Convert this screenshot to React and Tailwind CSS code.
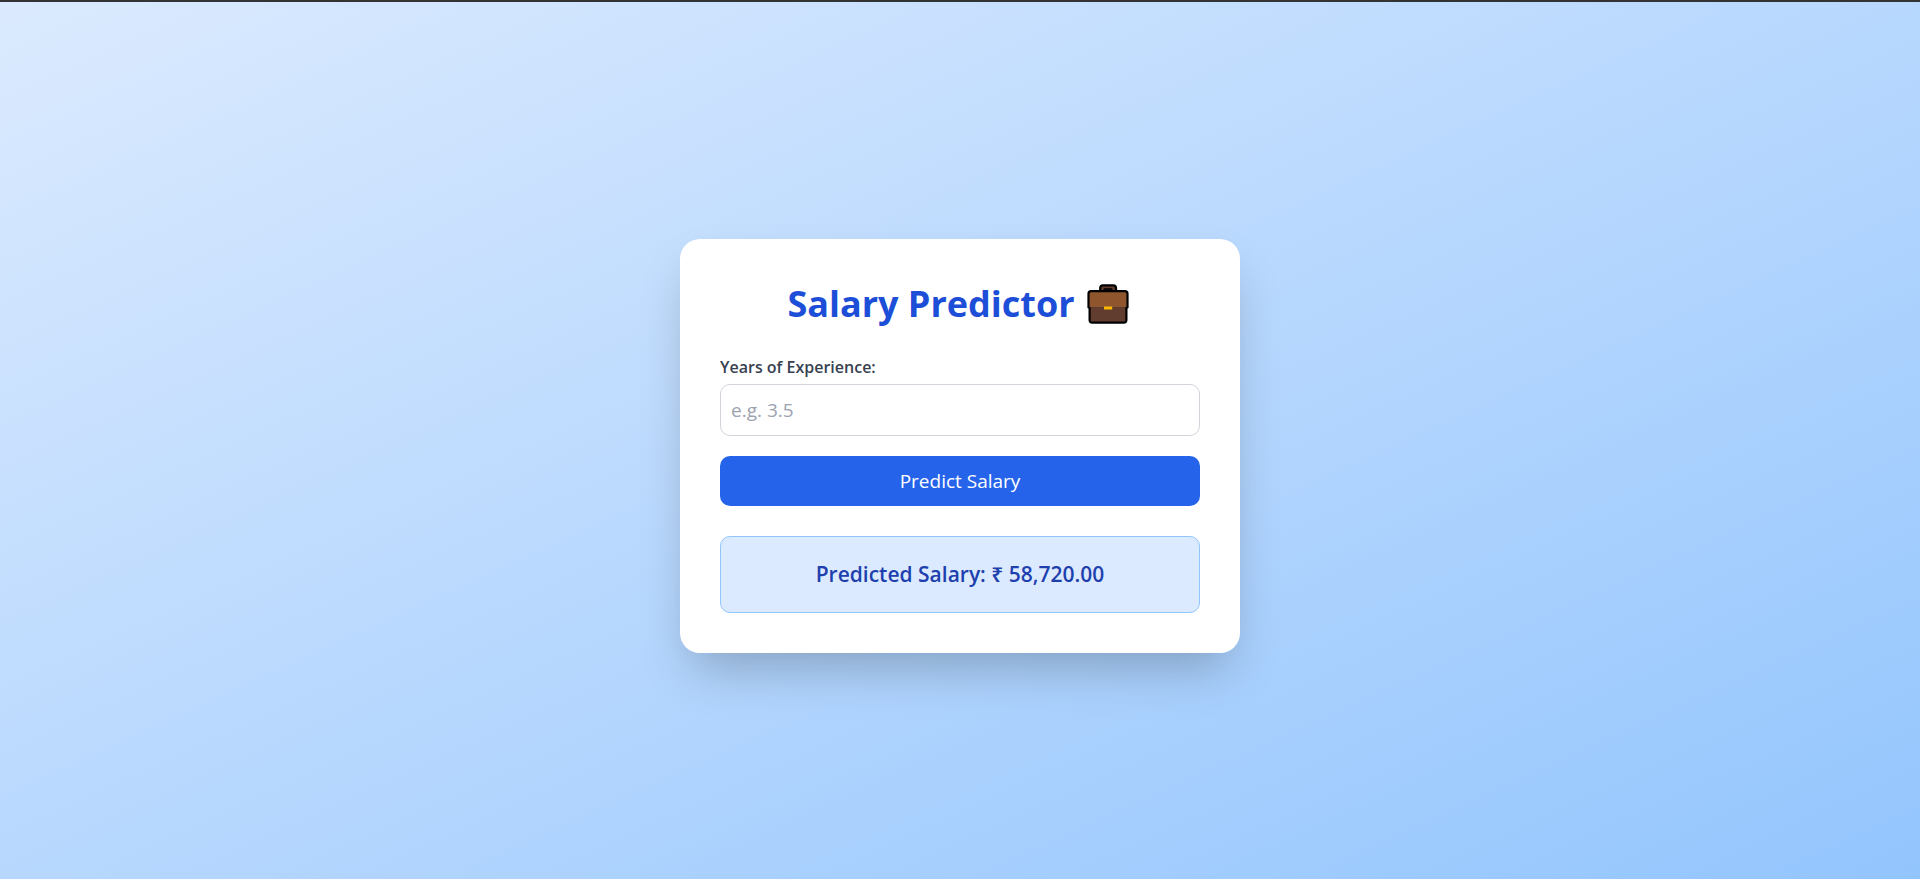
import { useState } from "react";

function Briefcase() {
  return (
    <svg viewBox="0 0 46 40" className="h-10 w-[46px]" role="img" aria-label="Briefcase">
      <path d="M13.200 8V4Q13.200 1.300 15.900 1.300H26.300Q29 1.300 29 4V8z" fill="#613d30" stroke="#000" strokeWidth="2.200" />
      <path d="M17 4.800H25V8H17z" fill="#140c0a" stroke="#000" strokeWidth="1" strokeLinejoin="round" />
      <path d="M2.600 22V36Q2.600 38.600 5.200 38.600H36.800Q39.400 38.600 39.400 36V22z" fill="#613d30" stroke="#000" strokeWidth="2.200" />
      <path d="M1.500 23V9.800Q1.500 7.200 4.100 7.200H37.900Q40.500 7.200 40.500 9.800V23z" fill="#8f562e" />
      <path d="M1.500 23.500V9.800Q1.500 7.200 4.100 7.200H37.900Q40.500 7.200 40.500 9.800V23.500" fill="none" stroke="#000" strokeWidth="2.200" strokeLinecap="round" />
      <rect x="17" y="22.500" width="8.200" height="3" fill="#ffb900" />
    </svg>
  );
}

export default function App() {
  const [years, setYears] = useState("");
  const [salary, setSalary] = useState("58,720.00");

  const predict = (event) => {
    event.preventDefault();
    const value = Number.parseFloat(years);
    if (Number.isFinite(value)) {
      const estimate = 25000 + value * 9500;
      setSalary(estimate.toLocaleString("en-IN", { minimumFractionDigits: 2, maximumFractionDigits: 2 }));
    }
  };

  return (
    <main className="flex min-h-screen items-center justify-center border-t-2 border-[#333333] bg-linear-to-br from-[#dbeafe] to-[#93c5fd] pt-[11px] font-['Open_Sans','Noto_Sans',sans-serif]">
      <section className="w-full max-w-[560px] rounded-[20px] bg-white p-10 shadow-[0_25px_50px_-12px_rgba(0,0,0,0.25)]">
        <h1 className="mb-[26px] flex items-center justify-center gap-3 text-[36px] leading-[50px] font-bold text-[#1d4ed8]">
          Salary Predictor
          <Briefcase />
        </h1>
        <form onSubmit={predict}>
          <label htmlFor="years" className="mb-1 block text-base leading-[25px] font-semibold text-[#374151]">
            Years of Experience:
          </label>
          <input
            id="years"
            type="text"
            inputMode="decimal"
            placeholder="e.g. 3.5"
            value={years}
            onChange={(event) => setYears(event.target.value)}
            className="mb-5 block h-[52px] w-full rounded-[10px] border border-[#d1d5db] px-2.5 text-[19px] text-[#374151] placeholder:text-[#9ca3af] focus:outline-2 focus:outline-[#2563eb]"
          />
          <button type="submit" className="block h-[50px] w-full rounded-[10px] bg-[#2563eb] text-[19px] text-white hover:bg-[#1d4ed8]">
            Predict Salary
          </button>
        </form>
        <p className="mt-[30px] rounded-[10px] border border-[#93c5fd] bg-[#dbeafe] py-6 text-center text-[21px] leading-[27px] font-semibold text-[#1e40af]">
          Predicted Salary: ₹ {salary}
        </p>
      </section>
    </main>
  );
}
